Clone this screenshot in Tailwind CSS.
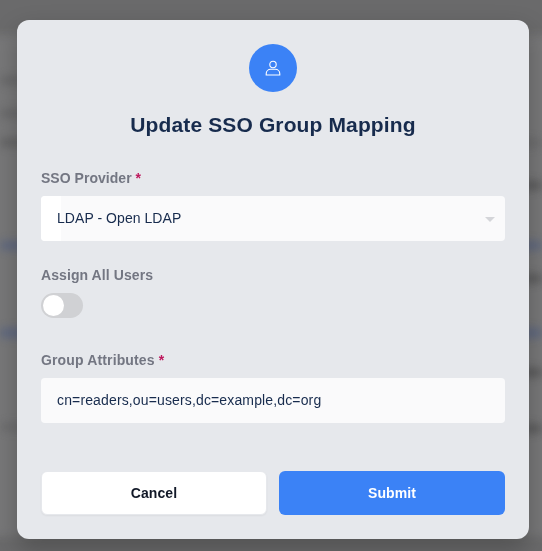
<!DOCTYPE html>
<html lang="en">
<head>
    <meta charset="UTF-8">
    <title>Update SSO Group Mapping</title>
    <script src="https://cdn.jsdelivr.net/npm/@tailwindcss/browser@4"></script>
</head>
<body class="h-[551px] overflow-hidden bg-[#787879] font-['Liberation_Sans',Arial,sans-serif]">
    <!-- Blurred page behind the modal -->
    <div class="fixed inset-0 blur-[4px]">
        <div class="absolute left-[-10px] right-[-10px] top-[-10px] h-[45px] bg-[#6a6a6b]"></div>
        <div class="absolute left-0 w-[40px] top-[76px] h-[9px] bg-[#69696a]"></div>
        <div class="absolute left-0 w-[40px] top-[109px] h-[9px] bg-[#69696a]"></div>
        <div class="absolute left-0 w-[40px] top-[138px] h-[9px] bg-[#646465]"></div>
        <div class="absolute left-0 w-[30px] top-[241px] h-[9px] bg-[#5f6880]"></div>
        <div class="absolute left-0 w-[30px] top-[328px] h-[10px] bg-[#5f6880]"></div>
        <div class="absolute left-0 w-[40px] top-[423px] h-[8px] bg-[#6c6c6d]"></div>
        <div class="absolute right-0 w-[30px] top-[139px] h-[8px] bg-[#6c6c6d]"></div>
        <div class="absolute right-0 w-[30px] top-[181px] h-[9px] bg-[#5c5c5d]"></div>
        <div class="absolute right-0 w-[30px] top-[241px] h-[9px] bg-[#5f6880]"></div>
        <div class="absolute right-0 w-[30px] top-[274px] h-[9px] bg-[#5c5c5d]"></div>
        <div class="absolute right-0 w-[30px] top-[328px] h-[10px] bg-[#5f6880]"></div>
        <div class="absolute right-0 w-[30px] top-[368px] h-[9px] bg-[#5a5a5b]"></div>
        <div class="absolute right-0 w-[40px] top-[424px] h-[9px] bg-[#5c5c5d]"></div>
        <div class="absolute left-[-10px] right-[-10px] top-[536px] h-[25px] bg-[#6a6a6b]"></div>
    </div>

    <div class="fixed inset-0 pl-[17px] pt-[20px]">
        <div class="w-[512px] h-[519px] rounded-xl bg-[#e6e8ec] p-6 flex flex-col shadow-[0_10px_25px_rgba(0,0,0,0.25)]">
            <div class="flex flex-col items-center">
                <div class="w-12 h-12 rounded-full bg-[#3b82f6] flex items-center justify-center">
                    <svg class="w-4 h-4" viewBox="0 0 16 16" fill="none" stroke="white" stroke-width="1.1">
                        <circle cx="8" cy="4.5" r="3.2"/>
                        <path d="M1.2 15v-1.3c0-2.5 2-4.4 4.5-4.4h4.6c2.5 0 4.5 1.9 4.5 4.4V15z"/>
                    </svg>
                </div>
                <h2 class="mt-[19px] text-[21px] leading-7 font-bold tracking-[0.125px] text-[#172b4d]">Update SSO Group Mapping</h2>
            </div>

            <div class="mt-[29px]">
                <label class="block text-sm leading-5 font-bold tracking-[0.03px] text-[#737682]">SSO Provider <span class="text-[#be185d]">*</span></label>
                <div class="relative mt-[8px] h-[45px] pb-[2px] rounded bg-[#fafafb] flex items-center px-4 text-sm tracking-[0.05px] text-[#172b4d]">
                    <div class="absolute left-0 top-0 bottom-0 w-5 rounded-l bg-white"></div>
                    <span class="relative">LDAP - Open LDAP</span>
                    <div class="absolute right-[10px] top-[21px] w-0 h-0 border-x-[5px] border-x-transparent border-t-[5px] border-t-[#d4d5d9]"></div>
                </div>
            </div>

            <div class="mt-[24px]">
                <label class="block text-sm leading-5 font-bold tracking-[0.08px] text-[#737682]">Assign All Users</label>
                <div class="mt-[8px] w-[42px] h-[25px] rounded-full bg-[#d0d1d4] relative">
                    <div class="absolute left-[2px] top-[2px] w-[21px] h-[21px] rounded-full bg-white"></div>
                </div>
            </div>

            <div class="mt-[32px]">
                <label class="block text-sm leading-5 font-bold tracking-[0.14px] text-[#737682]">Group Attributes <span class="text-[#be185d]">*</span></label>
                <div class="mt-[8px] h-[45px] pb-[2px] rounded bg-[#fafafb] flex items-center px-4 text-sm tracking-[0.14px] text-[#172b4d]">cn=readers,ou=users,dc=example,dc=org</div>
            </div>

            <div class="mt-auto grid grid-cols-2 gap-3">
                <button class="h-11 rounded-md border border-[#e6e8ec] bg-white text-sm font-bold tracking-[0.1px] text-[#111827] shadow-[0_1px_2px_rgba(0,0,0,0.05)]">Cancel</button>
                <button class="h-11 rounded-md bg-[#3b82f6] text-sm font-bold tracking-[0.1px] text-white">Submit</button>
            </div>
        </div>
    </div>
</body>
</html>
